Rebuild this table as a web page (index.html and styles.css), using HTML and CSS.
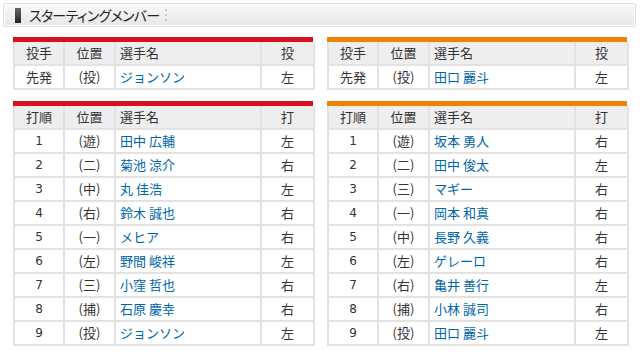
FILE: index.html
```html
<!DOCTYPE html>
<html lang="ja">
<head>
<meta charset="utf-8">
<link rel="stylesheet" href="styles.css">
</head>
<body>
<div class="title-bar">
  <span class="marker"></span>
  <h2 class="title">スターティングメンバー</h2>
  <span class="grip"><i></i><i></i><i></i></span>
</div>
<div class="grid">
  <div class="team team-red">
    <table class="lineup">
      <colgroup><col class="c1"><col class="c2"><col class="c3"><col class="c4"></colgroup>
      <tr><th>投手</th><th>位置</th><th class="name">選手名</th><th>投</th></tr>
      <tr><td>先発</td><td>(投)</td><td class="name"><a>ジョンソン</a></td><td>左</td></tr>
    </table>
  </div>
  <div class="team team-orange">
    <table class="lineup">
      <colgroup><col class="c1"><col class="c2"><col class="c3"><col class="c4"></colgroup>
      <tr><th>投手</th><th>位置</th><th class="name">選手名</th><th>投</th></tr>
      <tr><td>先発</td><td>(投)</td><td class="name"><a>田口 麗斗</a></td><td>左</td></tr>
    </table>
  </div>
  <div class="team team-red">
    <table class="lineup">
      <colgroup><col class="c1"><col class="c2"><col class="c3"><col class="c4"></colgroup>
      <tr><th>打順</th><th>位置</th><th class="name">選手名</th><th>打</th></tr>
      <tr><td class="num">1</td><td>(遊)</td><td class="name"><a>田中 広輔</a></td><td>左</td></tr>
      <tr><td class="num">2</td><td>(二)</td><td class="name"><a>菊池 涼介</a></td><td>右</td></tr>
      <tr><td class="num">3</td><td>(中)</td><td class="name"><a>丸 佳浩</a></td><td>左</td></tr>
      <tr><td class="num">4</td><td>(右)</td><td class="name"><a>鈴木 誠也</a></td><td>右</td></tr>
      <tr><td class="num">5</td><td>(一)</td><td class="name"><a>メヒア</a></td><td>右</td></tr>
      <tr><td class="num">6</td><td>(左)</td><td class="name"><a>野間 峻祥</a></td><td>左</td></tr>
      <tr><td class="num">7</td><td>(三)</td><td class="name"><a>小窪 哲也</a></td><td>右</td></tr>
      <tr><td class="num">8</td><td>(捕)</td><td class="name"><a>石原 慶幸</a></td><td>右</td></tr>
      <tr><td class="num">9</td><td>(投)</td><td class="name"><a>ジョンソン</a></td><td>左</td></tr>
    </table>
  </div>
  <div class="team team-orange">
    <table class="lineup">
      <colgroup><col class="c1"><col class="c2"><col class="c3"><col class="c4"></colgroup>
      <tr><th>打順</th><th>位置</th><th class="name">選手名</th><th>打</th></tr>
      <tr><td class="num">1</td><td>(遊)</td><td class="name"><a>坂本 勇人</a></td><td>右</td></tr>
      <tr><td class="num">2</td><td>(二)</td><td class="name"><a>田中 俊太</a></td><td>左</td></tr>
      <tr><td class="num">3</td><td>(三)</td><td class="name"><a>マギー</a></td><td>右</td></tr>
      <tr><td class="num">4</td><td>(一)</td><td class="name"><a>岡本 和真</a></td><td>右</td></tr>
      <tr><td class="num">5</td><td>(中)</td><td class="name"><a>長野 久義</a></td><td>右</td></tr>
      <tr><td class="num">6</td><td>(左)</td><td class="name"><a>ゲレーロ</a></td><td>右</td></tr>
      <tr><td class="num">7</td><td>(右)</td><td class="name"><a>亀井 善行</a></td><td>左</td></tr>
      <tr><td class="num">8</td><td>(捕)</td><td class="name"><a>小林 誠司</a></td><td>右</td></tr>
      <tr><td class="num">9</td><td>(投)</td><td class="name"><a>田口 麗斗</a></td><td>左</td></tr>
    </table>
  </div>
</div>
</body>
</html>
```

FILE: styles.css
```css
html, body {
  margin: 0;
  padding: 0;
  background: #fff;
}
body {
  font-family: "Noto Sans CJK JP", "Liberation Sans", sans-serif;
  color: #333;
  font-size: 13px;
}
.title-bar {
  margin: 3px 4px 0 3px;
  height: 22px;
  border: 1px solid #dcdcdc;
  border-radius: 2px;
  background: linear-gradient(#fafafa 0%, #f0f0f0 50%, #e6e6e6 100%);
  box-shadow: inset 0 0 0 1px #fff;
  display: flex;
  align-items: center;
  padding-left: 11px;
}
.marker {
  width: 6px;
  height: 15px;
  background: linear-gradient(#666, #222);
}
.title {
  margin: 0 0 0 8px;
  font-size: 14px;
  font-weight: normal;
  color: #222233;
  font-feature-settings: "palt";
  letter-spacing: -0.7px;
  line-height: 22px;
}
.grip {
  margin-left: 6px;
  display: flex;
  flex-direction: column;
  gap: 3px;
}
.grip i {
  width: 2px;
  height: 2px;
  background: #c8c8c8;
}
.grid {
  display: grid;
  grid-template-columns: 300px 300px;
  column-gap: 14px;
  row-gap: 11px;
  padding: 10px 13px 0 13px;
}
.team {
  border-top: 5px solid #d7111f;
}
.team-orange {
  border-top-color: #ef8200;
}
.lineup {
  width: 300px;
  border-collapse: collapse;
  table-layout: fixed;
}
.c1 { width: 50px; }
.c2 { width: 51px; }
.c3 { width: 146px; }
.c4 { width: 53px; }
.lineup th, .lineup td {
  border: 2px solid #e2e2e2;
  height: 22px;
  padding: 0;
  text-align: center;
  font-weight: normal;
  font-size: 13px;
  line-height: 22px;
  white-space: nowrap;
}
.lineup tr:first-child th {
  border-top: 0;
}
.lineup th {
  background: #eeeeee;
}
.lineup .name {
  text-align: left;
  padding-left: 4px;
}
.lineup a {
  color: #0066aa;
  text-decoration: none;
}
.lineup .num {
  font-family: "DejaVu Sans", sans-serif;
  font-size: 12px;
}
```
